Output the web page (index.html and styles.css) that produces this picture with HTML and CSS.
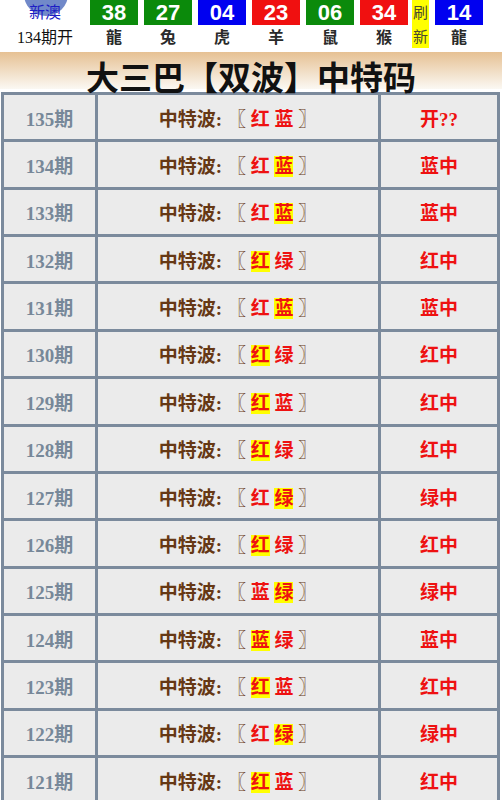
FILE: index.html
```html
<!DOCTYPE html>
<html lang="zh-CN">
<head>
<meta charset="utf-8"/>
<title>大三巴【双波】中特码</title>
<link rel="stylesheet" href="styles.css">
</head>
<body>
<div class="top">
  <div class="issue">
    <span class="dot"></span>
    <div class="city">新澳</div>
    <div class="next">134期开</div>
  </div>
  <div class="balls">
    <div class="ball"><span class="num green">38</span><span class="sx">龍</span></div>
    <div class="ball"><span class="num green">27</span><span class="sx">兔</span></div>
    <div class="ball"><span class="num blue">04</span><span class="sx">虎</span></div>
    <div class="ball"><span class="num red">23</span><span class="sx">羊</span></div>
    <div class="ball"><span class="num green">06</span><span class="sx">鼠</span></div>
    <div class="ball"><span class="num red">34</span><span class="sx">猴</span></div>
    <div class="refresh">刷<br>新</div>
    <div class="ball"><span class="num blue">14</span><span class="sx">龍</span></div>
  </div>
</div>
<div class="banner">大三巴【双波】中特码</div>
<table class="list">
<colgroup><col class="c1"><col class="c2"><col class="c3"></colgroup>
<tr><td class="qi">135期</td><td class="bo">中特波: 〖 <span class="r">红</span> <span class="r">蓝</span> 〗</td><td class="res">开??</td></tr>
<tr><td class="qi">134期</td><td class="bo">中特波: 〖 <span class="r">红</span> <span class="r hl">蓝</span> 〗</td><td class="res">蓝中</td></tr>
<tr><td class="qi">133期</td><td class="bo">中特波: 〖 <span class="r">红</span> <span class="r hl">蓝</span> 〗</td><td class="res">蓝中</td></tr>
<tr><td class="qi">132期</td><td class="bo">中特波: 〖 <span class="r hl">红</span> <span class="r">绿</span> 〗</td><td class="res">红中</td></tr>
<tr><td class="qi">131期</td><td class="bo">中特波: 〖 <span class="r">红</span> <span class="r hl">蓝</span> 〗</td><td class="res">蓝中</td></tr>
<tr><td class="qi">130期</td><td class="bo">中特波: 〖 <span class="r hl">红</span> <span class="r">绿</span> 〗</td><td class="res">红中</td></tr>
<tr><td class="qi">129期</td><td class="bo">中特波: 〖 <span class="r hl">红</span> <span class="r">蓝</span> 〗</td><td class="res">红中</td></tr>
<tr><td class="qi">128期</td><td class="bo">中特波: 〖 <span class="r hl">红</span> <span class="r">绿</span> 〗</td><td class="res">红中</td></tr>
<tr><td class="qi">127期</td><td class="bo">中特波: 〖 <span class="r">红</span> <span class="r hl">绿</span> 〗</td><td class="res">绿中</td></tr>
<tr><td class="qi">126期</td><td class="bo">中特波: 〖 <span class="r hl">红</span> <span class="r">绿</span> 〗</td><td class="res">红中</td></tr>
<tr><td class="qi">125期</td><td class="bo">中特波: 〖 <span class="r">蓝</span> <span class="r hl">绿</span> 〗</td><td class="res">绿中</td></tr>
<tr><td class="qi">124期</td><td class="bo">中特波: 〖 <span class="r hl">蓝</span> <span class="r">绿</span> 〗</td><td class="res">蓝中</td></tr>
<tr><td class="qi">123期</td><td class="bo">中特波: 〖 <span class="r hl">红</span> <span class="r">蓝</span> 〗</td><td class="res">红中</td></tr>
<tr><td class="qi">122期</td><td class="bo">中特波: 〖 <span class="r">红</span> <span class="r hl">绿</span> 〗</td><td class="res">绿中</td></tr>
<tr><td class="qi">121期</td><td class="bo">中特波: 〖 <span class="r hl">红</span> <span class="r">蓝</span> 〗</td><td class="res">红中</td></tr>
</table>
</body>
</html>
```

FILE: styles.css
```css
body {
    margin: 0;
    background: #fff;
    font-family: "Liberation Serif", "Noto Sans CJK SC", serif;
}
.top {
    display: flex;
    height: 52px;
    overflow: hidden;
}
.issue {
    position: relative;
    width: 90px;
    text-align: center;
}
.dot {
    position: absolute;
    left: 24px;
    top: -28px;
    width: 44px;
    height: 44px;
    border-radius: 50%;
    background: #7189c9;
}
.city {
    position: relative;
    font-size: 16px;
    line-height: 26px;
    color: #1d1dc4;
}
.next {
    font-size: 16px;
    line-height: 24px;
    color: #111;
}
.balls {
    display: flex;
    gap: 6px;
}
.ball {
    width: 48px;
    text-align: center;
}
.num {
    display: block;
    height: 25px;
    line-height: 25px;
    color: #fff;
    font: bold 22px "Liberation Sans", Arial, sans-serif;
}
.green { background: #0b8a0b; }
.blue { background: #0000f0; }
.red { background: #f01010; }
.sx {
    display: block;
    font: bold 16px "Noto Sans CJK SC", sans-serif;
    line-height: 22px;
    color: #2a2a2a;
}
.refresh {
    width: 17px;
    height: 48px;
    margin-left: -2px;
    background: #ffff00;
    font: 15px "Noto Sans CJK SC", sans-serif;
    line-height: 24px;
    text-align: center;
    color: #4a4a30;
}
.banner {
    height: 37px;
    margin-bottom: 3px;
    line-height: 37px;
    text-align: center;
    font: bold 33px "Noto Sans CJK SC", sans-serif;
    color: #111;
    background: linear-gradient(#e6c193, #fbf8f3);
}
.list {
    width: 499px;
    margin-left: 1px;
    border-collapse: collapse;
    table-layout: fixed;
    background: #ebebeb;
}
.c1 { width: 94px; }
.c2 { width: 283px; }
.c3 { width: 119px; }
.list td {
    height: 44.36px;
    padding: 0;
    border: 3px solid #7b8a9c;
    text-align: center;
    font-size: 19px;
    font-weight: bold;
}
.qi {
    color: #778899;
}
.bo {
    color: #663814;
}
.r {
    color: #ee1111;
}
.hl {
    background: #ffff00;
}
.res {
    color: #ee1111;
}
```
